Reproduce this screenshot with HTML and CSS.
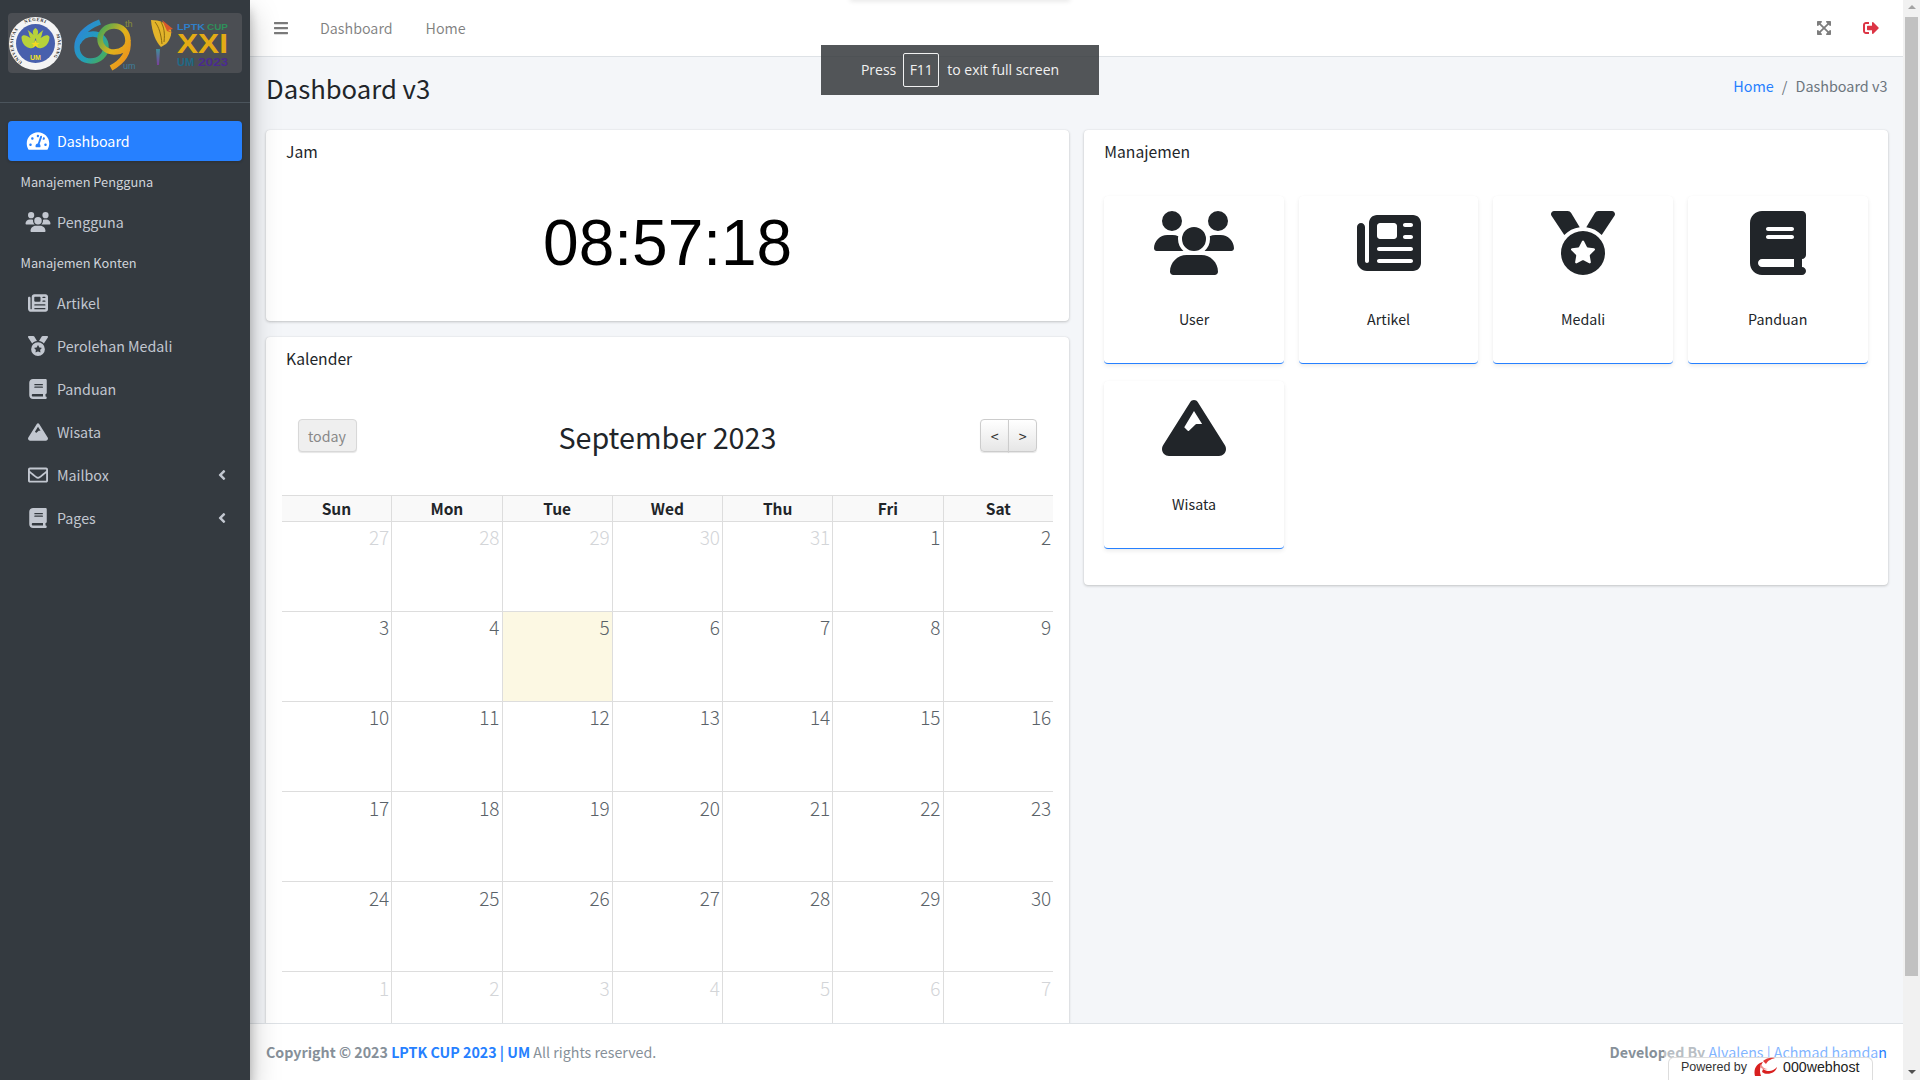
FILE: index.html
```html
<!DOCTYPE html>
<html>

	<head>
		<meta charset="UTF-8">
		<title>Dashboard v3</title>
		<link rel="stylesheet" href="styles.css">
	</head>

	<body>
		<svg class="defs" width="0" height="0">
			<symbol id="i-gauge" viewBox="0 0 576 512"><path d="M288 32C128.94 32 0 160.94 0 320c0 52.8 14.25 102.26 39.06 144.8 5.61 9.62 16.3 15.2 27.44 15.2h443c11.14 0 21.83-5.58 27.44-15.2C561.75 422.26 576 372.8 576 320c0-159.06-128.94-288-288-288zm0 64c14.71 0 26.58 10.13 30.32 23.65-1.11 2.26-2.64 4.23-3.45 6.67l-9.22 27.67c-5.13 3.49-10.97 6.01-17.64 6.01-17.67 0-32-14.33-32-32S270.33 96 288 96zM96 384c-17.67 0-32-14.33-32-32s14.33-32 32-32 32 14.33 32 32-14.33 32-32 32zm48-160c-17.67 0-32-14.33-32-32s14.33-32 32-32 32 14.33 32 32-14.33 32-32 32zm246.77-72.41l-61.33 184C343.13 347.33 352 364.54 352 384c0 11.72-3.38 22.55-8.88 32H232.88c-5.5-9.45-8.88-20.28-8.88-32 0-33.94 26.5-61.43 59.9-63.59l61.34-184.01c4.17-12.56 17.73-19.45 30.36-15.17 12.57 4.19 19.35 17.79 15.17 30.36zm14.66 57.2l15.52-46.55c3.47-1.29 7.13-2.23 11.05-2.23 17.67 0 32 14.33 32 32s-14.33 32-32 32c-11.38-.01-20.89-6.28-26.57-15.22zM480 384c-17.67 0-32-14.33-32-32s14.33-32 32-32 32 14.33 32 32-14.33 32-32 32z"/></symbol>
			<symbol id="i-users" viewBox="0 0 640 512"><path d="M144 0a80 80 0 1 1 0 160A80 80 0 1 1 144 0zM512 0a80 80 0 1 1 0 160A80 80 0 1 1 512 0zM0 298.7C0 239.8 47.8 192 106.7 192h42.7c15.9 0 31 3.5 44.6 9.7c-1.3 7.2-1.9 14.7-1.9 22.3c0 38.2 16.8 72.5 43.3 96c-.2 0-.4 0-.7 0H21.3C9.6 320 0 310.4 0 298.7zM405.3 320c-.2 0-.4 0-.7 0c26.6-23.5 43.3-57.8 43.3-96c0-7.6-.7-15-1.9-22.3c13.6-6.3 28.7-9.7 44.6-9.7h42.7C592.2 192 640 239.8 640 298.7c0 11.8-9.6 21.3-21.3 21.3H405.3zM224 224a96 96 0 1 1 192 0 96 96 0 1 1 -192 0zM128 485.3C128 411.7 187.7 352 261.3 352H378.7C452.3 352 512 411.7 512 485.3c0 14.7-11.9 26.7-26.7 26.7H154.7c-14.7 0-26.7-11.9-26.7-26.7z"/></symbol>
			<symbol id="i-news" viewBox="0 0 512 512"><path d="M96 96c0-35.3 28.7-64 64-64H448c35.3 0 64 28.7 64 64V416c0 35.3-28.7 64-64 64H80c-44.2 0-80-35.8-80-80V128c0-17.7 14.3-32 32-32s32 14.3 32 32V400c0 8.8 7.2 16 16 16s16-7.2 16-16V96zm64 24v80c0 13.3 10.7 24 24 24H296c13.3 0 24-10.7 24-24V120c0-13.3-10.7-24-24-24H184c-13.3 0-24 10.7-24 24zm208-8c0 8.8 7.2 16 16 16h48c8.8 0 16-7.2 16-16s-7.2-16-16-16H384c-8.8 0-16 7.2-16 16zm0 96c0 8.8 7.2 16 16 16h48c8.8 0 16-7.2 16-16s-7.2-16-16-16H384c-8.8 0-16 7.2-16 16zM160 304c0 8.8 7.2 16 16 16H432c8.8 0 16-7.2 16-16s-7.2-16-16-16H176c-8.8 0-16 7.2-16 16zm0 96c0 8.8 7.2 16 16 16H432c8.8 0 16-7.2 16-16s-7.2-16-16-16H176c-8.8 0-16 7.2-16 16z"/></symbol>
			<symbol id="i-medal" viewBox="0 0 512 512"><path d="M4.1 38.2C1.4 34.2 0 29.4 0 24.6C0 11 11 0 24.6 0H133.9c11.2 0 21.7 5.9 27.4 15.5l68.5 114.1c-48.2 6.1-91.3 28.6-123.4 61.9L4.1 38.2zm503.7 0L405.6 191.5c-32.1-33.3-75.2-55.8-123.4-61.9L350.7 15.5C356.5 5.9 366.9 0 378.1 0H487.4C501 0 512 11 512 24.6c0 4.8-1.4 9.6-4.1 13.6zM80 336a176 176 0 1 1 352 0A176 176 0 1 1 80 336zm184.4-94.9c-3.4-7-13.3-7-16.8 0l-22.4 45.4c-1.4 2.8-4 4.7-7 5.1L168 298.9c-7.7 1.1-10.7 10.5-5.2 16l36.3 35.4c2.2 2.2 3.2 5.2 2.7 8.3l-8.6 49.9c-1.3 7.6 6.7 13.5 13.6 9.9l44.8-23.6c2.7-1.4 6-1.4 8.7 0l44.8 23.6c6.9 3.6 14.9-2.2 13.6-9.9l-8.6-49.9c-.5-3 .5-6.1 2.7-8.3l36.3-35.4c5.6-5.4 2.5-14.8-5.2-16l-50.1-7.3c-3-.4-5.7-2.4-7-5.1l-22.4-45.4z"/></symbol>
			<symbol id="i-book" viewBox="0 0 448 512"><path d="M96 0C43 0 0 43 0 96V416c0 53 43 96 96 96H384h32c17.7 0 32-14.3 32-32s-14.3-32-32-32V384c17.7 0 32-14.3 32-32V32c0-17.7-14.3-32-32-32H384 96zm0 384H352v64H96c-17.7 0-32-14.3-32-32s14.3-32 32-32zm32-240c0-8.8 7.2-16 16-16H336c8.8 0 16 7.2 16 16s-7.2 16-16 16H144c-8.8 0-16-7.2-16-16zm16 48H336c8.8 0 16 7.2 16 16s-7.2 16-16 16H144c-8.8 0-16-7.2-16-16s7.2-16 16-16z"/></symbol>
			<symbol id="i-mountain" viewBox="0 0 512 512"><path fill-rule="evenodd" d="M256 32c12.5 0 24.1 6.4 30.8 17L503.4 394.4c5.6 8.9 8.6 19.2 8.6 29.7c0 30.9-25 55.9-55.9 55.9H55.9C25 480 0 455 0 424.1c0-10.5 3-20.8 8.6-29.7L225.2 49c6.6-10.6 18.3-17 30.8-17zM256 120L321 224H276c-4 0-8 2-10 5L216 278c-3 3-7 3-10 0L178 250z"/></symbol>
			<symbol id="i-mail" viewBox="0 0 512 512"><path d="M464 64H48C21.49 64 0 85.49 0 112v288c0 26.51 21.49 48 48 48h416c26.51 0 48-21.49 48-48V112c0-26.51-21.49-48-48-48zm0 48v40.805c-22.422 18.259-58.168 46.651-134.587 106.49-16.841 13.247-50.201 45.072-73.413 44.701-23.208.375-56.579-31.459-73.413-44.701C106.18 199.465 70.425 171.067 48 152.805V112h416zM48 400V214.398c22.914 18.251 55.409 43.862 104.938 82.646 21.857 17.205 60.134 55.186 103.062 54.955 42.717.231 80.509-37.199 103.053-54.947 49.528-38.783 82.032-64.401 104.947-82.653V400H48z"/></symbol>
			<symbol id="i-angle" viewBox="0 0 256 512"><path d="M31.7 239l136-136c9.4-9.4 24.6-9.4 33.9 0l22.6 22.6c9.4 9.4 9.4 24.6 0 33.9L127.9 256l96.4 96.4c9.4 9.4 9.4 24.6 0 33.9L201.7 409c-9.4 9.4-24.6 9.4-33.9 0l-136-136c-9.5-9.4-9.5-24.6-.1-34z"/></symbol>
			<symbol id="i-bars" viewBox="0 0 448 512"><path d="M16 132h416c8.837 0 16-7.163 16-16V76c0-8.837-7.163-16-16-16H16C7.163 60 0 67.163 0 76v40c0 8.837 7.163 16 16 16zm0 160h416c8.837 0 16-7.163 16-16v-40c0-8.837-7.163-16-16-16H16c-8.837 0-16 7.163-16 16v40c0 8.837 7.163 16 16 16zm0 160h416c8.837 0 16-7.163 16-16v-40c0-8.837-7.163-16-16-16H16c-8.837 0-16 7.163-16 16v40c0 8.837 7.163 16 16 16z"/></symbol>
			<symbol id="i-expand" viewBox="0 0 448 512"><path d="M448 344v112a23.94 23.94 0 0 1-24 24H312c-21.39 0-32.09-25.9-17-41l36.2-36.2L224 295.6 116.77 402.9 153 439c15.09 15.1 4.39 41-17 41H24a23.94 23.94 0 0 1-24-24V344c0-21.4 25.89-32.1 41-17l36.19 36.2L184.46 256 77.18 148.7 41 185c-15.1 15.1-41 4.4-41-17V56a23.94 23.94 0 0 1 24-24h112c21.39 0 32.09 25.9 17 41l-36.2 36.2L224 216.4l107.23-107.3L295 73c-15.09-15.1-4.39-41 17-41h112a23.94 23.94 0 0 1 24 24v112c0 21.4-25.89 32.1-41 17l-36.19-36.2L263.54 256l107.28 107.3L407 327.1c15.1-15.2 41-4.5 41 16.9z"/></symbol>
			<symbol id="i-signout" viewBox="0 0 512 512"><path d="M497 273L329 441c-15 15-41 4.5-41-17v-96H152c-13.3 0-24-10.7-24-24v-96c0-13.3 10.7-24 24-24h136V88c0-21.4 25.9-32 41-17l168 168c9.3 9.4 9.3 24.6 0 34zM192 436v-40c0-6.6-5.4-12-12-12H96c-17.7 0-32-14.3-32-32V160c0-17.7 14.3-32 32-32h84c6.6 0 12-5.4 12-12V76c0-6.6-5.4-12-12-12H96c-53 0-96 43-96 96v192c0 53 43 96 96 96h84c6.6 0 12-5.4 12-12z"/></symbol>
		</svg>

		<div class="app">
			<aside class="sidebar">
				<div class="brand">
					<svg class="brand-logo" viewBox="8 13 234 60">
						<defs>
							<linearGradient id="g6" x1="0" y1="0" x2="1" y2="1">
								<stop offset="0" stop-color="#2f7fe0"/>
								<stop offset="0.6" stop-color="#22a0b8"/>
								<stop offset="1" stop-color="#4fae4a"/>
							</linearGradient>
							<linearGradient id="g9" x1="0" y1="0" x2="1" y2="1">
								<stop offset="0" stop-color="#3ca65a"/>
								<stop offset="0.5" stop-color="#e2b21a"/>
								<stop offset="1" stop-color="#f08a1e"/>
							</linearGradient>
							<linearGradient id="gt" x1="0" y1="0" x2="0" y2="1">
								<stop offset="0" stop-color="#3f8f9a"/>
								<stop offset="1" stop-color="#7a3f9a"/>
							</linearGradient>
							<path id="ring-top" d="M24.250 24A22.500 22.500 0 0 1 46.750 24"/>
							<path id="ring-right" d="M51.400 27.600A22.500 22.500 0 0 1 46.750 63"/>
							<path id="ring-left" d="M24.250 63A22.500 22.500 0 0 1 19.600 27.600"/>
						</defs>
						<circle cx="35.500" cy="43.500" r="26.500" fill="#f4f4f4"/>
						<circle cx="35.500" cy="43.500" r="19.500" fill="#4860ad"/>
						<text class="seal-text"><textPath href="#ring-top" startOffset="50%" text-anchor="middle">NEGERI</textPath></text>
						<text class="seal-text"><textPath href="#ring-right" startOffset="50%" text-anchor="middle">MALANG</textPath></text>
						<text class="seal-text"><textPath href="#ring-left" startOffset="50%" text-anchor="middle">UNIVERSITAS</textPath></text>
						<path d="M35.500 28c-3 2-3 4-2 7-2-2-4-4-6-5 2 3 1 5 3 8-4-3-8-4-9-1 0 5 3 10 8 11 3 1 5-1 6-3h0c-1-3-1-5 0-7 1 2 1 4 0 7 1 2 3 4 6 3 5-1 8-6 8-11-1-3-5-2-9 1 2-3 1-5 3-8-2 1-4 3-6 5 1-3 1-5-2-7z" fill="#b7d23a"/>
						<path d="M35.500 40l1.200 3h3l-2.400 1.800 1 3-2.800-1.800-2.800 1.800 1-3-2.400-1.800h3z" fill="#f4d820"/>
						<text class="seal-um" x="35.500" y="60" text-anchor="middle">UM</text>
						<path d="M100 22C84 28 77 38 77 47c0 9 6 14 14 14s15-6 15-14-6-13-13-13c-6 0-12 3-15 9" fill="none" stroke="url(#g6)" stroke-width="5.500"/>
						<path d="M128 41c0-9-6-15-14-15s-14 6-14 13 6 13 14 13 14-5 14-11c1 11-4 20-17 27" fill="none" stroke="url(#g9)" stroke-width="5.500"/>
						<text class="logo-small" x="125" y="27" fill="#8a8f3a">th</text>
						<text class="logo-small" x="123" y="69" fill="#3f7f9a">um</text>
						<path d="M151 20c8 0 17 3 20 10 1 4-1 10-5 14l-5 3c-5-5-9-14-10-27z" fill="#e3b42a"/>
						<path d="M155 22c4 5 6 12 7 22M161 22c3 5 4 11 3 20" fill="none" stroke="#8a6a10" stroke-width="1"/>
						<path d="M162 20l11 9-5 1 5 3-6-2z" fill="#d8572b"/>
						<path d="M156 49h4l-1 16h-2z" fill="url(#gt)"/>
						<text class="logo-lptk" x="177" y="30" fill="#2f7fc8" textLength="28" lengthAdjust="spacingAndGlyphs">LPTK</text>
						<text class="logo-lptk" x="207" y="30" fill="#2f8f5a" textLength="21" lengthAdjust="spacingAndGlyphs">CUP</text>
						<text class="logo-xxi" x="177" y="53" textLength="51" lengthAdjust="spacingAndGlyphs">XXI</text>
						<text class="logo-year" x="177" y="66" fill="#1f6a86" textLength="17" lengthAdjust="spacingAndGlyphs">UM</text>
						<text class="logo-year" x="198" y="66" fill="#4a2a90" textLength="30" lengthAdjust="spacingAndGlyphs">2023</text>
					</svg>
				</div>
				<nav class="menu">
					<a class="menu-item active"><span class="menu-icon"><svg><use href="#i-gauge"/></svg></span>Dashboard</a>
					<div class="menu-header">Manajemen Pengguna</div>
					<a class="menu-item"><span class="menu-icon"><svg><use href="#i-users"/></svg></span>Pengguna</a>
					<div class="menu-header">Manajemen Konten</div>
					<a class="menu-item"><span class="menu-icon"><svg><use href="#i-news"/></svg></span>Artikel</a>
					<a class="menu-item"><span class="menu-icon"><svg><use href="#i-medal"/></svg></span>Perolehan Medali</a>
					<a class="menu-item"><span class="menu-icon"><svg><use href="#i-book"/></svg></span>Panduan</a>
					<a class="menu-item"><span class="menu-icon"><svg><use href="#i-mountain"/></svg></span>Wisata</a>
					<a class="menu-item"><span class="menu-icon"><svg><use href="#i-mail"/></svg></span>Mailbox<svg class="menu-angle"><use href="#i-angle"/></svg></a>
					<a class="menu-item"><span class="menu-icon"><svg><use href="#i-book"/></svg></span>Pages<svg class="menu-angle"><use href="#i-angle"/></svg></a>
				</nav>
			</aside>

			<div class="main">
				<header class="navbar">
					<svg class="nav-bars"><use href="#i-bars"/></svg>
					<a class="nav-link">Dashboard</a>
					<a class="nav-link">Home</a>
					<span class="nav-space"></span>
					<svg class="nav-expand"><use href="#i-expand"/></svg>
					<svg class="nav-signout"><use href="#i-signout"/></svg>
				</header>

				<main class="content">
					<div class="content-header">
						<h1>Dashboard v3</h1>
						<div class="breadcrumb"><a>Home</a><span class="sep">/</span><span class="current">Dashboard v3</span></div>
					</div>
					<div class="columns">
						<div class="col">
							<section class="card clock-card">
								<div class="card-title">Jam</div>
								<div class="clock">08:57:18</div>
							</section>
							<section class="card">
								<div class="card-title">Kalender</div>
								<div class="calendar">
									<div class="cal-toolbar">
										<div><button class="btn-today">today</button></div>
										<h2>September 2023</h2>
										<div class="cal-nav"><button>&lt;</button><button>&gt;</button></div>
									</div>
									<table class="cal-table">
										<thead>
											<tr><th>Sun</th><th>Mon</th><th>Tue</th><th>Wed</th><th>Thu</th><th>Fri</th><th>Sat</th></tr>
										</thead>
										<tbody>
											<tr><td class="other">27</td><td class="other">28</td><td class="other">29</td><td class="other">30</td><td class="other">31</td><td>1</td><td>2</td></tr>
											<tr><td>3</td><td>4</td><td class="today">5</td><td>6</td><td>7</td><td>8</td><td>9</td></tr>
											<tr><td>10</td><td>11</td><td>12</td><td>13</td><td>14</td><td>15</td><td>16</td></tr>
											<tr><td>17</td><td>18</td><td>19</td><td>20</td><td>21</td><td>22</td><td>23</td></tr>
											<tr><td>24</td><td>25</td><td>26</td><td>27</td><td>28</td><td>29</td><td>30</td></tr>
											<tr><td class="other">1</td><td class="other">2</td><td class="other">3</td><td class="other">4</td><td class="other">5</td><td class="other">6</td><td class="other">7</td></tr>
										</tbody>
									</table>
								</div>
							</section>
						</div>
						<div class="col">
							<section class="card manage-card">
								<div class="card-title">Manajemen</div>
								<div class="tiles">
									<a class="tile"><svg class="tile-icon"><use href="#i-users"/></svg><span>User</span></a>
									<a class="tile"><svg class="tile-icon"><use href="#i-news"/></svg><span>Artikel</span></a>
									<a class="tile"><svg class="tile-icon"><use href="#i-medal"/></svg><span>Medali</span></a>
									<a class="tile"><svg class="tile-icon"><use href="#i-book"/></svg><span>Panduan</span></a>
									<a class="tile"><svg class="tile-icon"><use href="#i-mountain"/></svg><span>Wisata</span></a>
								</div>
							</section>
						</div>
					</div>
				</main>

				<footer class="footer">
					<div><b>Copyright © 2023 <a>LPTK CUP 2023 | UM</a></b> All rights reserved.</div>
					<div><b>Developed By</b> <a>Alvalens | Achmad hamdan</a></div>
				</footer>
			</div>

			<div class="scrollbar">
				<span class="arrow-up"></span>
				<span class="thumb"></span>
				<span class="arrow-down"></span>
			</div>
		</div>

		<div class="top-shadow"></div>
		<div class="fs-toast">Press <kbd>F11</kbd> to exit full screen</div>
		<div class="host-fade"></div>
		<div class="host-badge">
			<span>Powered by</span>
			<svg class="host-logo" viewBox="0 0 24 20">
				<path d="M1 19C-1 12 3 6 9 5 6 9 5 14 7 19z" fill="#d8201f"/>
				<path d="M9 4c3-3 8-4 12-3-3 1-7 2-9 6z" fill="#e23a38"/>
				<path d="M9 12c4 3 10 3 14-2-1 6-10 9-15 5z" fill="#d8201f"/>
				<path d="M7 7c1 3 4 5 7 5-4 1-7 0-8-3z" fill="#ef8f8e"/>
			</svg>
			<span class="host-name">000webhost</span>
		</div>
	</body>

</html>
```

FILE: styles.css
```css
* {
	box-sizing: border-box;
}

html,
body {
	margin: 0;
	height: 100%;
	overflow: hidden;
}

body {
	font-family: "Noto Sans CJK SC", "Source Sans Pro", "Noto Sans", sans-serif;
	font-size: 14.250px;
	line-height: 24px;
	color: #212529;
}

.defs {
	position: absolute;
}

.app {
	display: flex;
	height: 100vh;
}

/* sidebar */
.sidebar {
	width: 250px;
	flex: none;
	background: #343a40;
	box-shadow: 0 14px 28px rgba(0, 0, 0, .25), 0 10px 10px rgba(0, 0, 0, .22);
	position: relative;
	z-index: 3;
}

.brand {
	height: 103px;
	padding: 13px 8px 0;
	border-bottom: 1px solid #4b545c;
}

.brand-logo {
	display: block;
	width: 234px;
	height: 60px;
	background: #4b4e53;
	border-radius: 4px;
}

.seal-text {
	font: bold 4.500px "Liberation Serif", serif;
	fill: #222;
	letter-spacing: .6px;
}

.seal-um {
	font: bold 7px "Liberation Sans", sans-serif;
	fill: #f4e020;
}

.logo-small {
	font: 9px "Liberation Sans", sans-serif;
}

.logo-lptk {
	font: bold 9px "Liberation Sans", sans-serif;
}

.logo-xxi {
	font: bold 28px "Liberation Sans", sans-serif;
	fill: #e3ab14;
}

.logo-year {
	font: bold 10px "Liberation Sans", sans-serif;
}

.menu {
	padding: 18px 8px 0;
	display: flex;
	flex-direction: column;
	gap: 3.200px;
}

.menu-item {
	height: 40px;
	display: flex;
	align-items: center;
	padding-left: 15.500px;
	color: #c2c7d0;
	border-radius: 4px;
}

.menu-item.active {
	background: #2680ff;
	color: #fff;
	box-shadow: 0 1px 3px rgba(0, 0, 0, .2);
}

.menu-icon {
	width: 28px;
	margin-right: 5.500px;
	height: 20px;
	display: flex;
	justify-content: center;
}

.menu-icon svg {
	width: 26px;
	height: 20px;
	fill: currentColor;
}

.menu-angle {
	width: 8px;
	height: 16px;
	margin-left: auto;
	margin-right: 16px;
	fill: currentColor;
}

.menu-header {
	height: 34.400px;
	padding-left: 12.500px;
	font-size: 12.800px;
	line-height: 35px;
	color: #d0d4db;
}

/* main column */
.main {
	flex: 1;
	min-width: 0;
	display: flex;
	flex-direction: column;
	background: #f4f6f9;
}

.navbar {
	height: 57px;
	flex: none;
	display: flex;
	align-items: center;
	background: #fff;
	border-bottom: 1px solid #dee2e6;
	padding-bottom: 1px;
}

.nav-bars {
	width: 14px;
	height: 16px;
	margin-left: 24px;
	fill: #7a7a7a;
}

.nav-link {
	color: rgba(0, 0, 0, .5);
	margin-left: 33px;
}

.nav-bars + .nav-link {
	margin-left: 32px;
}

.nav-space {
	flex: 1;
}

.nav-expand {
	width: 14px;
	height: 16px;
	fill: #7d7d7d;
}

.nav-signout {
	width: 16px;
	height: 16px;
	margin-left: 32px;
	margin-right: 24px;
	fill: #dc3545;
}

.content {
	flex: 1;
	min-height: 0;
	overflow: hidden;
	padding: 0 15.500px 0 16px;
}

.content-header {
	height: 73px;
	display: flex;
	justify-content: space-between;
	padding-top: 14px;
}

.content-header h1 {
	margin: 0;
	font-size: 25.700px;
	font-weight: 400;
	line-height: 34px;
}

.breadcrumb {
	padding-top: 3px;
	font-size: 14.400px;
}

.breadcrumb a {
	color: #2680ff;
}

.breadcrumb .sep {
	color: #6c757d;
	padding: 0 8px;
}

.breadcrumb .current {
	color: #6c757d;
}

.columns {
	display: grid;
	grid-template-columns: 1fr 1fr;
	gap: 15px;
	align-items: start;
}

.col {
	display: flex;
	flex-direction: column;
	gap: 16px;
}

.card {
	background: #fff;
	border-radius: 4px;
	box-shadow: 0 0 1px rgba(0, 0, 0, .125), 0 1px 3px rgba(0, 0, 0, .2);
}

.card-title {
	font-size: 15.700px;
	line-height: 24px;
	padding: 10px 20px 0;
}

.clock-card {
	height: 191px;
}

.clock {
	font-family: "Liberation Sans", Arial, sans-serif;
	font-size: 64px;
	line-height: 74px;
	text-align: center;
	padding-top: 42px;
	color: #000;
}

/* calendar */
.calendar {
	padding: 0 16px 0 15.500px;
}

.cal-toolbar {
	display: grid;
	grid-template-columns: 1fr auto 1fr;
	padding: 48px 16px 0;
	height: 124px;
}

.cal-toolbar h2 {
	margin: -3px 0 0;
	font-size: 28.700px;
	font-weight: 400;
	line-height: 42px;
}

.cal-toolbar button {
	height: 33px;
	font-family: inherit;
	font-size: 14.250px;
	line-height: 20px;
	padding: 0;
	border: 1px solid #ccc;
	border-radius: 4px;
	color: #333;
	background: linear-gradient(#fff, #e6e6e6);
	box-shadow: 0 1px 1px rgba(0, 0, 0, .1);
}

.cal-toolbar .btn-today {
	width: 59px;
	color: #888;
	background: #efefef;
	border-color: #d8d8d8;
}

.cal-nav {
	display: flex;
	justify-content: flex-end;
}

.cal-nav button {
	width: 29px;
}

.cal-nav button:first-child {
	border-radius: 4px 0 0 4px;
}

.cal-nav button:last-child {
	margin-left: -1px;
	border-radius: 0 4px 4px 0;
}

.cal-table {
	width: 100%;
	table-layout: fixed;
	border-collapse: collapse;
}

.cal-table th,
.cal-table td {
	border: 1px solid #ddd;
}

.cal-table tr > :first-child {
	border-left: 0;
}

.cal-table tr > :last-child {
	border-right: 0;
}

.cal-table th {
	height: 25.500px;
	padding: 0;
	background: #f9f9f9;
	font-size: 15.500px;
	font-weight: 700;
	line-height: 24px;
}

.cal-table td {
	height: 90.200px;
	padding: 1.500px 2px 0 0;
	vertical-align: top;
	text-align: right;
	font-size: 19px;
	font-weight: 300;
	line-height: 27px;
	color: #5a6268;
}

.cal-table td.other {
	color: #d3d5d8;
}

.cal-table td.today {
	background: #fcf8e3;
}

/* manajemen */
.manage-card {
	height: 455px;
}

.tiles {
	display: grid;
	grid-template-columns: repeat(4, 1fr);
	gap: 17px 15px;
	padding: 32px 20px 0;
}

.tile {
	height: 168px;
	display: flex;
	flex-direction: column;
	align-items: center;
	padding-top: 15px;
	background: #fff;
	border-bottom: 1px solid #2680ff;
	border-radius: 4px;
	box-shadow: 0 0 1px rgba(0, 0, 0, .04), 0 2px 4px rgba(0, 0, 0, .08);
}

.tile-icon {
	width: 84px;
	height: 64px;
	flex: none;
	fill: #212529;
}

.tile span {
	margin-top: 32px;
}

.footer {
	height: 57px;
	flex: none;
	display: flex;
	justify-content: space-between;
	align-items: center;
	padding: 0 16px;
	background: #fff;
	border-top: 1px solid #dee2e6;
	color: #869099;
}

.footer a {
	color: #2680ff;
}

/* browser scrollbar */
.scrollbar {
	width: 17px;
	flex: none;
	display: flex;
	flex-direction: column;
	align-items: center;
	background: #f1f1f1;
}

.thumb {
	width: 13px;
	height: 959px;
	background: #c1c1c1;
	margin-top: 8px;
}

.arrow-up,
.arrow-down {
	width: 0;
	height: 0;
	border-left: 4px solid transparent;
	border-right: 4px solid transparent;
}

.arrow-up {
	margin-top: 5px;
	border-bottom: 4px solid #a3a3a3;
}

.arrow-down {
	margin-top: auto;
	margin-bottom: 6px;
	border-top: 4px solid #505050;
}

/* overlays */
.top-shadow {
	position: absolute;
	left: 850px;
	top: -4px;
	width: 220px;
	height: 4px;
	box-shadow: 0 1px 5px rgba(0, 0, 0, .12);
	z-index: 5;
}

.fs-toast {
	position: absolute;
	left: 821px;
	top: 45px;
	width: 278px;
	height: 50px;
	display: flex;
	align-items: center;
	justify-content: center;
	gap: 8px;
	background: rgba(50, 54, 57, .84);
	color: #f1f1f1;
	font-family: "Open Sans", sans-serif;
	font-size: 14px;
	z-index: 6;
}

.fs-toast kbd {
	width: 36px;
	height: 34px;
	margin-left: -1px;
	display: flex;
	align-items: center;
	justify-content: center;
	border: 1px solid #f1f1f1;
	border-radius: 2px;
	font: inherit;
}

.host-fade {
	position: absolute;
	left: 1664px;
	top: 1038px;
	width: 214px;
	height: 20px;
	background: rgba(255, 255, 255, .42);
	z-index: 6;
}

.host-badge {
	position: absolute;
	left: 1668px;
	top: 1057px;
	width: 205px;
	height: 23px;
	display: flex;
	align-items: center;
	padding: 0 0 4px 12px;
	background: #fff;
	border: 1px solid #ddd;
	border-bottom: 0;
	border-radius: 6px 6px 0 0;
	font-family: "Liberation Sans", sans-serif;
	font-size: 12.500px;
	color: #333;
	z-index: 7;
}

.host-logo {
	width: 24px;
	height: 20px;
	margin-left: 7px;
}

.host-name {
	margin-left: 5px;
	font-size: 14.200px;
	color: #222;
}
```
